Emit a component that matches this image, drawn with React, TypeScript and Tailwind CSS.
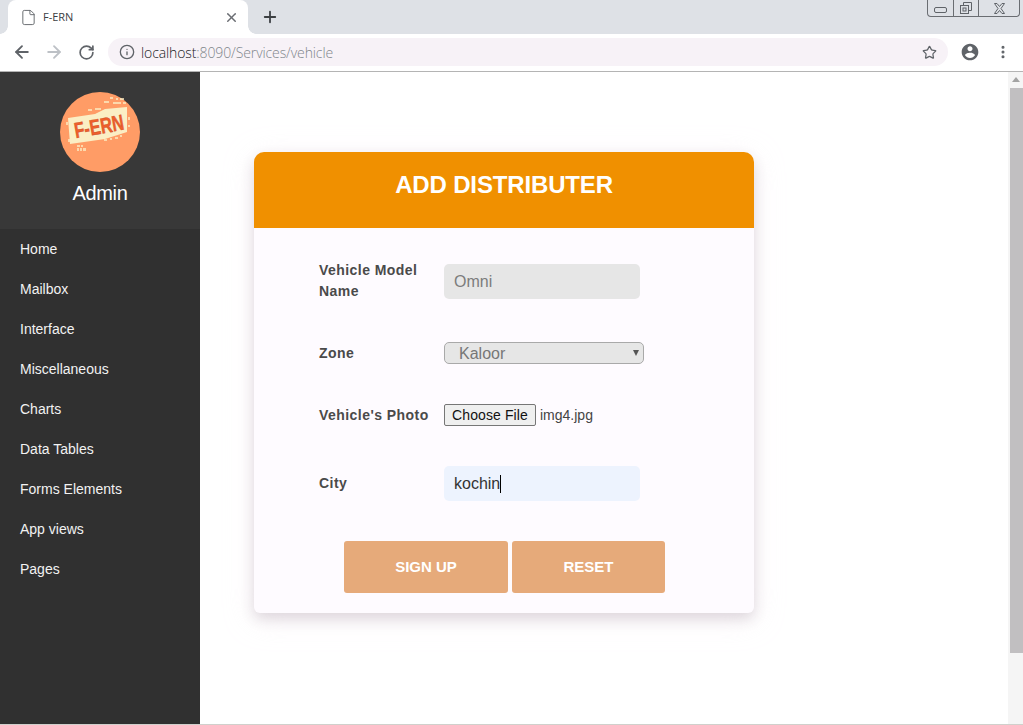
import { ArrowLeft, ArrowRight, Info, MoreVertical, Plus, RotateCw, Star, X, File as FileIcon } from "lucide-react";

const nav = ["Home", "Mailbox", "Interface", "Miscellaneous", "Charts", "Data Tables", "Forms Elements", "App views", "Pages"];

const specks: [number, number, number, number][] = [
  [50, 5, 3, 2], [56, 6, 2, 2], [60, 6, 4, 2], [44, 9, 5, 2], [53, 10, 8, 2], [63, 10, 3, 2], [28, 17, 4, 2],
  [35, 16, 6, 2], [6, 30, 2, 3], [8, 47, 3, 3], [17, 53, 3, 2], [21, 53, 2, 2], [17, 56, 2, 3], [20, 56, 2, 3], [23, 56, 3, 3],
  [44, 47, 3, 2], [50, 46, 2, 2], [55, 45, 3, 2], [60, 43, 2, 2], [68, 25, 2, 3], [68, 33, 2, 2],
];

function Logo() {
  return (
    <svg width="80" height="80" viewBox="0 0 80 80" className="block overflow-visible">
      <circle cx="40" cy="40" r="40" fill="#ff9c66" />
      <polygon points="8,26 35,22 45,17 67,15 67,40 45,47 10,52" fill="#fbeec4" />
      {specks.map(([x, y, w, h], i) => (
        <rect key={i} x={x} y={y} width={w} height={h} fill="#fbeec4" opacity={0.75} />
      ))}
      <g transform="rotate(-10 39 34)">
        <text x="39" y="42" textAnchor="middle" textLength={50} lengthAdjust="spacingAndGlyphs" fontFamily="'Liberation Sans', sans-serif" fontWeight="700" fontSize="22" fill="#ee5f2c" stroke="#c9481f" strokeWidth="0.4">F-ERN</text>
      </g>
    </svg>
  );
}

function WindowControls() {
  return (
    <div className="ml-auto mr-[3px] flex h-[17px] w-[93px] rounded-b-[4px] border border-t-0 border-[#6a6d72] bg-[#dee1e6]">
      <div className="flex w-[26px] items-center justify-center border-r border-[#6a6d72]">
        <div className="mt-[4px] h-[6px] w-[13px] rounded-[2px] border border-[#5f6368]" />
      </div>
      <div className="flex w-[25px] items-center justify-center border-r border-[#6a6d72]">
        <svg width="14" height="14" viewBox="0 0 14 14" fill="none" stroke="#5f6368">
          <rect x="1.5" y="4.5" width="8" height="8" />
          <rect x="4" y="7" width="3" height="3" />
          <path d="M4.5 4V1.5h8v8H10" />
        </svg>
      </div>
      <div className="flex flex-1 items-center justify-center">
        <svg width="13" height="11" viewBox="0 0 13 11" fill="none" stroke="#5f6368">
          <path d="M1.500 .5h2.500l2.500 3 2.500-3h2.500l-3.500 5 3.500 5H9l-2.500-3-2.500 3H1.500l3.500-5z" />
        </svg>
      </div>
    </div>
  );
}

function BrowserChrome() {
  return (
    <div className="shrink-0 font-['Liberation_Sans',sans-serif]">
      <div className="flex h-[34px] bg-[#dee1e6] pl-[8px]">
        <div className="relative flex h-[34px] w-[240px] items-center rounded-t-[8px] bg-white pl-[12px] pr-[9px]">
          <span className="absolute bottom-0 left-[-8px] h-[8px] w-[8px] bg-[radial-gradient(circle_at_0_0,transparent_7.5px,white_8px)]" />
          <span className="absolute bottom-0 right-[-8px] h-[8px] w-[8px] bg-[radial-gradient(circle_at_100%_0,transparent_7.5px,white_8px)]" />
          <FileIcon size={17} strokeWidth={1.3} className="text-[#5f6368]" />
          <span className="ml-[6px] font-['Open_Sans',sans-serif] text-[11px] text-[#3c4043]">F-ERN</span>
          <X size={15} strokeWidth={2.4} className="ml-auto text-[#6a6d72]" />
        </div>
        <Plus size={18} strokeWidth={2.4} className="ml-[13px] mt-[8px] text-[#3c4043]" />
        <WindowControls />
      </div>
      <div className="flex h-[38px] items-center border-b border-[#b4b4b4] bg-white pb-[1px]">
        <ArrowLeft size={20} strokeWidth={2.2} className="ml-[12px] text-[#5f6368]" />
        <ArrowRight size={20} strokeWidth={2.2} className="ml-[12px] text-[#bdc1c6]" />
        <RotateCw size={17} strokeWidth={2.4} className="ml-[14px] text-[#5f6368]" />
        <div className="ml-[13px] flex h-[28px] w-[840px] items-center rounded-full bg-[#f7f2f7] pl-[11px] pr-[11px]">
          <Info size={16} strokeWidth={2} className="text-[#5f6368]" />
          <span className="ml-[6px] font-['Open_Sans',sans-serif] text-[14px] font-light tracking-[-0.11px] text-[#202124]">
            localhost<span className="text-[#80868b]">:8090/Services/vehicle</span>
          </span>
          <Star size={15} strokeWidth={2} className="ml-auto text-[#5f6368]" />
        </div>
        <svg width="20" height="20" viewBox="0 0 24 24" fill="#5f6368" className="ml-[12px]">
          <path d="M12 2C6.480 2 2 6.480 2 12s4.480 10 10 10 10-4.480 10-10S17.520 2 12 2zm0 3c1.660 0 3 1.340 3 3s-1.340 3-3 3-3-1.340-3-3 1.340-3 3-3zm0 14.200c-2.500 0-4.710-1.280-6-3.220.030-1.990 4-3.080 6-3.080 1.990 0 5.970 1.090 6 3.080-1.290 1.940-3.500 3.220-6 3.220z" />
        </svg>
        <MoreVertical size={16} strokeWidth={2.6} className="ml-[15px] text-[#5f6368]" />
      </div>
    </div>
  );
}

function Sidebar() {
  return (
    <aside className="flex w-[200px] shrink-0 flex-col bg-[#303030] text-white">
      <div className="flex h-[157px] flex-col items-center bg-[#383838] pt-[20px]">
        <Logo />
        <div className="mt-[9px] text-[20px] leading-[24px] tracking-[-0.35px]">Admin</div>
      </div>
      <nav className="flex flex-col">
        {nav.map((n) => (
          <a key={n} className="flex h-[40px] items-center pl-[20px] text-[14px] text-[#f2f2f2]">{n}</a>
        ))}
      </nav>
    </aside>
  );
}

function Row({ label, children, className }: { label: React.ReactNode; children: React.ReactNode; className: string }) {
  return (
    <div className={"flex items-center " + className}>
      <label className="w-[125px] text-[14px] font-bold leading-[21px] tracking-[0.45px] text-[#4a4a4a]">{label}</label>
      {children}
    </div>
  );
}

function Card() {
  return (
    <div className="ml-[54px] mt-[80px] h-[461px] w-[500px] rounded-b-[6px] rounded-t-[10px] bg-[#fefbff] shadow-[0_6px_14px_rgba(70,50,70,0.16),0_6px_30px_rgba(248,238,245,0.7)]">
      <div className="flex h-[76px] justify-center rounded-t-[10px] bg-[#f09000] pt-[18px] text-[24px] font-bold leading-[30px] tracking-[-0.15px] text-white">
        ADD DISTRIBUTER
      </div>
      <div className="flex flex-col pl-[65px] pt-[36px]">
        <Row label={<span className="block pb-[2px]">Vehicle Model<br />Name</span>} className="h-[35px]">
          <div className="flex h-[35px] w-[196px] items-center rounded-[5px] bg-[#e6e6e6] pl-[10px] text-[16px] text-[#7c7c7c]">Omni</div>
        </Row>
        <Row label="Zone" className="mt-[43px] h-[22px]">
          <div className="relative flex h-[22px] w-[200px] items-center rounded-[5px] border border-[#a9a9a9] bg-[#e6e6e6] pl-[14px] pt-[1px] text-[16px] text-[#777]">
            Kaloor
            <span className="absolute right-[4px] top-[7px] h-0 w-0 border-x-[3.5px] border-t-[6px] border-x-transparent border-t-[#555]" />
          </div>
        </Row>
        <Row label="Vehicle's Photo" className="mt-[40px] h-[22px]">
          <div className="flex h-[22px] w-[92px] items-center justify-center rounded-[2px] border border-[#767676] bg-[#efefef] text-[14px] tracking-[0.1px] text-[#111]">Choose File</div>
          <span className="ml-[4px] text-[14px] text-[#444]">img4.jpg</span>
        </Row>
        <Row label="City" className="mt-[40px] h-[35px]">
          <div className="flex h-[35px] w-[196px] items-center rounded-[5px] bg-[#edf3fe] pl-[10px] text-[16px] text-[#333]">
            kochin<span className="h-[18px] w-px bg-black" />
          </div>
        </Row>
      </div>
      <div className="ml-[90px] mt-[40px] flex gap-[4px]">
        <div className="flex h-[52px] w-[164px] items-center justify-center rounded-[3px] bg-[#e6aa7a] text-[15px] font-bold text-white">SIGN UP</div>
        <div className="flex h-[52px] w-[153px] items-center justify-center rounded-[3px] bg-[#e6aa7a] text-[15px] font-bold text-white">RESET</div>
      </div>
    </div>
  );
}

function Scrollbar() {
  return (
    <div className="flex w-[15px] shrink-0 flex-col items-center bg-[#f5f5f5]">
      <div className="mt-[5px] h-0 w-0 border-x-[4.5px] border-b-[5px] border-x-transparent border-b-[#a3a3a3]" />
      <div className="ml-[1px] mt-[6px] h-[565px] w-[13px] bg-[#c1bfc1]" />
    </div>
  );
}

export default function App() {
  return (
    <div className="flex h-[725px] w-[1023px] flex-col overflow-hidden bg-white font-['Liberation_Sans',sans-serif]">
      <BrowserChrome />
      <div className="flex min-h-0 flex-1 border-b border-[#d0d0cc]">
        <Sidebar />
        <main className="min-w-0 flex-1 overflow-hidden">
          <Card />
        </main>
        <Scrollbar />
      </div>
    </div>
  );
}
